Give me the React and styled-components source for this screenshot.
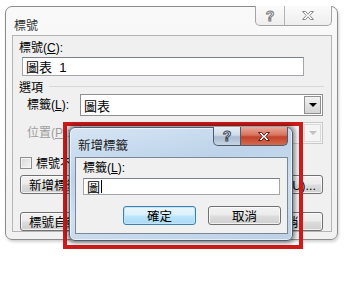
import React from "react";
import styled, { createGlobalStyle, css } from "styled-components";

const Global = createGlobalStyle`
  html, body { margin: 0; padding: 0; background: #fff; }
  body {
    font-family: "Liberation Sans", "Noto Sans CJK TC", sans-serif;
    font-size: 12px;
    color: #000;
  }
`;

const Page = styled.div`
  position: relative;
  width: 349px;
  height: 291px;
  overflow: hidden;
  background: #fff;
`;

/* ---------- outer dialog (basic theme) ---------- */

const Dialog = styled.div`
  margin: 6px 0 0 5px;
  width: 331px;
  height: 232px;
  border: 1px solid #8c8c8c;
  border-radius: 7px;
  background: linear-gradient(#f9f9f9, #f1f1f1);
  box-shadow: 1px 2px 3px rgba(0, 0, 0, 0.18);
  display: flex;
  flex-direction: column;
`;

const TitleBar = styled.div`
  height: 28px;
  display: flex;
  align-items: flex-start;
  justify-content: space-between;
`;

const Title = styled.div`
  padding: 9px 0 0 8px;
  font-size: 12px;
  color: #303030;
`;

const CaptionGroup = styled.div`
  display: flex;
  margin-right: 5px;
  margin-top: -1px;
  border: 1px solid #a4a4a4;
  border-top: none;
  border-radius: 0 0 5px 5px;
  background: linear-gradient(#fbfbfb, #eeeeee);
  overflow: hidden;
`;

const CaptionBtn = styled.div`
  width: ${(p) => p.$w}px;
  height: 19px;
  display: flex;
  align-items: center;
  justify-content: center;
  & + & { border-left: 1px solid #b4b4b4; }
`;

const OutlineQ = styled.span`
  font: bold 14px "Liberation Sans", sans-serif;
  color: #fff;
  -webkit-text-stroke: 1px #7a7a7a;
`;

const Panel = styled.div`
  margin: 0 5px 7px 6px;
  flex: 1;
  border: 1px solid #b5b5b5;
  background: #f0f0f0;
  display: flex;
  flex-direction: column;
  padding: 5px 0 0 6px;
`;

const Key = styled.span`
  text-decoration: underline;
  text-underline-offset: 1px;
`;

const Label = styled.div`
  height: 15px;
  line-height: 15px;
  color: ${(p) => (p.$disabled ? "#9d9d9d" : "#000")};
`;

const TextBox = styled.div`
  box-sizing: border-box;
  width: ${(p) => p.$w}px;
  height: ${(p) => p.$h}px;
  margin: ${(p) => p.$m || "0"};
  border: 1px solid #a2a5aa;
  border-top-color: #7b7f86;
  background: #fff;
  padding: 0 3px;
  display: flex;
  align-items: center;
  font-size: 13px;
  white-space: pre;
`;

const Caret = styled.span`
  display: inline-block;
  width: 1px;
  height: 13px;
  margin-left: 1px;
  background: #000;
`;

const GroupHead = styled.div`
  display: flex;
  align-items: center;
  gap: 6px;
  height: 15px;
  margin: 3px 7px 0 0;
  &::after {
    content: "";
    flex: 1;
    height: 1px;
    background: #d6d9dc;
  }
`;

const FieldRow = styled.div`
  display: flex;
  align-items: center;
  margin-top: ${(p) => p.$mt}px;
  padding-left: 8px;
  gap: 0;
`;

const FieldLabel = styled(Label)`
  width: 53px;
`;

const Combo = styled.div`
  box-sizing: border-box;
  width: 243px;
  height: 22px;
  display: flex;
  align-items: center;
  border: 1px solid ${(p) => (p.$disabled ? "#c9c9c9" : "#8e8f8f")};
  background: ${(p) => (p.$disabled ? "#f4f4f4" : "#fff")};
  padding: 0 0 0 3px;
  font-size: 13px;
`;

const ComboText = styled.div`
  flex: 1;
`;

const ComboArrow = styled.div`
  width: 15px;
  align-self: stretch;
  margin: 1px;
  display: flex;
  align-items: center;
  justify-content: center;
  border: 1px solid ${(p) => (p.$disabled ? "#dadada" : "#8e8f8f")};
  background: ${(p) =>
    p.$disabled ? "#f4f4f4" : "linear-gradient(#f2f2f2, #d4d4d4)"};
  &::before {
    content: "";
    border-left: 4px solid transparent;
    border-right: 4px solid transparent;
    border-top: 4px solid ${(p) => (p.$disabled ? "#c0c0c0" : "#000")};
  }
`;

const CheckRow = styled.div`
  display: flex;
  align-items: center;
  gap: 4px;
  margin-top: 10px;
  padding-left: 1px;
  white-space: nowrap;
`;

const CheckBox = styled.div`
  box-sizing: border-box;
  width: 12px;
  height: 12px;
  border: 1px solid #8e8f8f;
  background: linear-gradient(135deg, #d8d8d8, #f6f6f6);
  box-shadow: inset 0 0 0 1px #f4f4f4;
`;

const ButtonRow = styled.div`
  display: flex;
  justify-content: space-between;
  margin: ${(p) => p.$mt}px 8px 0 1px;
  white-space: nowrap;
`;

const Btn = styled.div`
  box-sizing: border-box;
  height: ${(p) => p.$h || 19}px;
  width: ${(p) => (p.$w ? `${p.$w}px` : "auto")};
  padding: 0 8px;
  display: flex;
  align-items: center;
  justify-content: center;
  border: 1px solid #707070;
  border-radius: 3px;
  font-size: 12.5px;
  background: linear-gradient(#f2f2f2 0%, #ebebeb 48%, #dddddd 52%, #cfcfcf 100%);
  box-shadow: inset 0 0 0 1px rgba(255, 255, 255, 0.7);
  ${(p) =>
    p.$primary &&
    css`
      border-color: #3c7fb1;
      background: linear-gradient(#eaf6fd 0%, #d9f0fc 48%, #bee6fd 52%, #a7d9f5 100%);
      box-shadow: inset 0 0 0 1px #c4e5f6;
    `}
`;

const Gap = styled.div`
  flex: 1;
`;

/* ---------- overlay: the new-label window inside the red frame ---------- */

const Highlight = styled.div`
  position: absolute;
  left: 63px;
  top: 122px;
  width: 230px;
  height: 118px;
  border: 4px solid #cf1a1a;
  padding: 1px 0 0 2px;
`;

const Window = styled.div`
  box-sizing: border-box;
  width: 224px;
  height: 114px;
  border: 1px solid #4e5d70;
  border-radius: 6px;
  background: linear-gradient(170deg, #d6e5f4 0%, #bdd3ea 35%, #cfdff0 60%, #bcd0e6 100%);
  box-shadow: inset 0 0 0 1px rgba(255, 255, 255, 0.6), 0 0 4px 2px rgba(0, 0, 0, 0.45);
  display: flex;
  flex-direction: column;
`;

const WinTitleBar = styled.div`
  height: 29px;
  display: flex;
  align-items: flex-start;
  justify-content: space-between;
`;

const WinTitle = styled.div`
  padding: 7px 0 0 8px;
  font-size: 12.5px;
  color: #1b1b1b;
`;

const AeroButtons = styled.div`
  display: flex;
  margin-right: 4px;
  margin-top: -1px;
`;

const AeroBtn = styled.div`
  box-sizing: border-box;
  width: ${(p) => p.$w}px;
  height: 19px;
  display: flex;
  align-items: center;
  justify-content: center;
  border: 1px solid #4f5b6a;
  border-top: none;
  ${(p) =>
    p.$close
      ? css`
          border-left: none;
          border-radius: 0 0 5px 0;
          background: linear-gradient(#e9a99b 0%, #d7735e 45%, #c3412b 55%, #d36a4f 100%);
        `
      : css`
          border-radius: 0 0 0 5px;
          background: linear-gradient(#e6eef6 0%, #cfdbe8 45%, #a9bbcf 55%, #c6d5e4 100%);
        `}
`;

const AeroQ = styled.span`
  font: bold 14px "Liberation Sans", sans-serif;
  color: #fff;
  -webkit-text-stroke: 1px #3b4656;
`;

const WinPanel = styled.div`
  margin: 0 4px 6px 5px;
  flex: 1;
  border: 1px solid #7a8797;
  background: #f0f0f0;
  display: flex;
  flex-direction: column;
  padding: 3px 0 0 7px;
`;

const WinButtons = styled.div`
  display: flex;
  justify-content: flex-end;
  gap: 12px;
  margin: 11px 6px 0 0;
`;

const XGlyph = ({ fill, stroke }) => (
  <svg width="14" height="11" viewBox="0 0 14 11">
    <path
      d="M1.5 1.5h3.2L7 4.3 9.3 1.5h3.2L8.8 5.5l3.7 4h-3.2L7 6.7 4.7 9.5H1.5l3.7-4z"
      fill={fill}
      stroke={stroke}
      strokeWidth="1"
      strokeLinejoin="round"
    />
  </svg>
);

export default function App() {
  return (
    <Page>
      <Global />
      <Dialog>
        <TitleBar>
          <Title>標號</Title>
          <CaptionGroup>
            <CaptionBtn $w={28}>
              <OutlineQ>?</OutlineQ>
            </CaptionBtn>
            <CaptionBtn $w={46}>
              <XGlyph fill="#fdfdfd" stroke="#8a8a8a" />
            </CaptionBtn>
          </CaptionGroup>
        </TitleBar>
        <Panel>
          <Label>
            標號(<Key>C</Key>):
          </Label>
          <TextBox $w={282} $h={19} $m="1px 0 0 3px">
            圖表  1
          </TextBox>
          <GroupHead>選項</GroupHead>
          <FieldRow $mt={0}>
            <FieldLabel>
              標籤(<Key>L</Key>):
            </FieldLabel>
            <Combo>
              <ComboText>圖表</ComboText>
              <ComboArrow />
            </Combo>
          </FieldRow>
          <FieldRow $mt={6}>
            <FieldLabel $disabled>
              位置(<Key>P</Key>):
            </FieldLabel>
            <Combo $disabled>
              <ComboText>選取項目之下</ComboText>
              <ComboArrow $disabled />
            </Combo>
          </FieldRow>
          <CheckRow>
            <CheckBox />
            標號不包含標籤(<Key>E</Key>)
          </CheckRow>
          <ButtonRow $mt={4}>
            <Btn $w={96}>新增標籤(N)...</Btn>
            <Btn $w={86}>刪除標籤(D)</Btn>
            <Btn $w={92}>編號方式(U)...</Btn>
          </ButtonRow>
          <ButtonRow $mt={18}>
            <Btn $w={120}>標號自動設定(A)...</Btn>
            <Gap />
            <Btn $w={70}>確定</Btn>
            <Btn $w={74} style={{ marginLeft: 8 }}>取消</Btn>
          </ButtonRow>
        </Panel>
      </Dialog>

      <Highlight>
        <Window>
          <WinTitleBar>
            <WinTitle>新增標籤</WinTitle>
            <AeroButtons>
              <AeroBtn $w={28}>
                <AeroQ>?</AeroQ>
              </AeroBtn>
              <AeroBtn $w={47} $close>
                <XGlyph fill="#ffffff" stroke="#5a2018" />
              </AeroBtn>
            </AeroButtons>
          </WinTitleBar>
          <WinPanel>
            <Label>
              標籤(<Key>L</Key>):
            </Label>
            <TextBox $w={197} $h={17} $m="2px 0 0 0">
              圖<Caret />
            </TextBox>
            <WinButtons>
              <Btn $w={73} $primary>確定</Btn>
              <Btn $w={73}>取消</Btn>
            </WinButtons>
          </WinPanel>
        </Window>
      </Highlight>
    </Page>
  );
}
